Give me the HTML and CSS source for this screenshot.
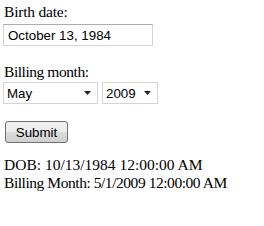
FILE: index.html
```html
<!DOCTYPE html>
<html>
<head>
<meta charset="utf-8">
<link rel="stylesheet" href="styles.css">
</head>
<body>
<form class="form">
  <div class="label">Birth date:</div>
  <div class="field"><input class="text" type="text" value="October 13, 1984"></div>
  <div class="label gap tight">Billing month:</div>
  <div class="field row">
    <div class="select month"><span>May</span><svg class="arrow" width="7" height="4" viewBox="0 0 7 4"><path d="M0 0H7L3.5 4Z" fill="#222"/></svg></div>
    <div class="select year"><span>2009</span><svg class="arrow" width="7" height="4" viewBox="0 0 7 4"><path d="M0 0H7L3.5 4Z" fill="#222"/></svg></div>
  </div>
  <div class="field btnrow"><button class="btn" type="button">Submit</button></div>
  <div class="out first">DOB: 10/13/1984 12:00:00 AM</div>
  <div class="out tight">Billing Month: 5/1/2009 12:00:00 AM</div>
</form>
</body>
</html>
```
FILE: styles.css
```css
html, body { margin: 0; padding: 0; background: #fff; }
body { font-family: "Liberation Serif", "Times New Roman", serif; font-size: 15.5px; color: #000; padding: 3px 0 0 4px; }
.form { display: flex; flex-direction: column; align-items: flex-start; }
.label { line-height: 18px; height: 18px; letter-spacing: -0.2px; }
.gap { margin-top: 17px; }
.tight { letter-spacing: -0.45px; }
.field { margin-top: 3px; }
.text {
  box-sizing: border-box; width: 150px; height: 22px; margin: 0 0 0 -1px;
  border: 1px solid #d4d4d4; border-top-color: #abadb3; padding: 0 0 0 4px;
  font-family: "Liberation Sans", Arial, sans-serif; font-size: 13.33px; color: #000; outline: none;
}
.row { display: flex; gap: 4px; margin-left: -1px; margin-top: 1px; }
.select {
  box-sizing: border-box; height: 22px; border: 1px solid #d4d4d4; display: flex; align-items: center;
  justify-content: space-between; padding: 0 6px 0 3px;
  font-family: "Liberation Sans", Arial, sans-serif; font-size: 13.33px; color: #000;
}
.month { width: 95px; }
.year { width: 56px; }
.btnrow { margin-top: 17px; margin-left: 1px; }
.btn {
  box-sizing: border-box; width: 63px; height: 22px; margin: 0; padding: 0;
  border: 1px solid #707070; border-radius: 3px;
  background: linear-gradient(#f2f2f2 0%, #ebebeb 50%, #dddddd 51%, #cfcfcf 100%);
  font-family: "Liberation Sans", Arial, sans-serif; font-size: 13.33px; color: #000;
}
.out { line-height: 18px; }
.first { margin-top: 13px; }
```
